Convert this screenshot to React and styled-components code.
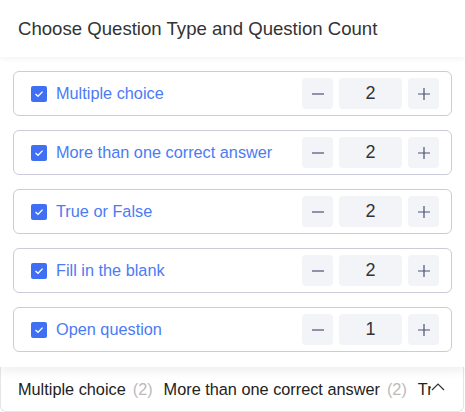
import React from "react"
import styled, { createGlobalStyle } from "styled-components"

const GlobalStyle = createGlobalStyle`
    body {
        margin: 0;
        background: #ffffff;
        font-family: "Liberation Sans", Arial, sans-serif;
    }
`

const Page = styled.div`
    width: 465px;
    height: 412px;
    overflow: hidden;
    position: relative;
    background: #ffffff;
`

const Popover = styled.div`
    position: relative;
    z-index: 2;
    background: #ffffff;
    box-shadow: 0 4px 10px rgba(0, 0, 0, 0.07);
`

const Header = styled.div`
    height: 57px;
    display: flex;
    align-items: center;
    padding-left: 18px;
    font-size: 18.6px;
    color: #333333;
    box-shadow: 0 2px 6px rgba(0, 0, 0, 0.05);
`

const List = styled.div`
    display: flex;
    flex-direction: column;
    gap: 14px;
    padding: 14px 13px 15px;
`

const Row = styled.div`
    height: 45px;
    box-sizing: border-box;
    display: flex;
    align-items: center;
    padding: 0 12px 0 17px;
    border: 1px solid #cbcbdc;
    border-radius: 6px;
`

const Check = styled.span`
    width: 16px;
    height: 16px;
    border-radius: 2px;
    background: #3f6ff4;
    display: flex;
    align-items: center;
    justify-content: center;
    flex-shrink: 0;
`

const Label = styled.span`
    margin-left: 9px;
    font-size: 16.3px;
    color: #4b7bf5;
    flex: 1;
`

const Stepper = styled.div`
    display: flex;
    gap: 6px;
`

const StepButton = styled.button`
    width: 31px;
    height: 31px;
    border: none;
    padding: 0;
    border-radius: 4px;
    background: #f2f4f8;
    display: flex;
    align-items: center;
    justify-content: center;
`

const Count = styled.div`
    width: 63px;
    height: 31px;
    border-radius: 4px;
    background: #f2f4f8;
    display: flex;
    align-items: center;
    justify-content: center;
    font-size: 18px;
    color: #333333;
`

const Summary = styled.div`
    height: 60px;
    box-sizing: border-box;
    margin-top: -15px;
    padding-top: 15px;
    border: 1px solid #e6e6ea;
    border-top: none;
    border-radius: 0 0 6px 6px;
    width: 464px;
    display: flex;
    align-items: center;
    position: relative;
`

const SummaryText = styled.div`
    width: 413px;
    margin-left: 17px;
    overflow: hidden;
    white-space: nowrap;
    font-size: 16.3px;
    color: #222222;
`

const Num = styled.span`
    color: #bbbbbb;
    margin: 0 11px 0 7px;
`

const Toggle = styled.span`
    display: flex;
    margin-top: -6px;
`

const types = [
    { name: "Multiple choice", count: 2 },
    { name: "More than one correct answer", count: 2 },
    { name: "True or False", count: 2 },
    { name: "Fill in the blank", count: 2 },
    { name: "Open question", count: 1 },
]

const Tick = () => (
    <svg width="10" height="8" viewBox="0 0 10 8">
        <path d="M1.5 4 L4 6.3 L8.6 1.6" fill="none" stroke="#fff" strokeWidth="1.3" />
    </svg>
)

const Minus = () => (
    <svg width="14" height="14" viewBox="0 0 14 14">
        <path d="M1 7 H13" stroke="#4a5274" strokeWidth="1.2" />
    </svg>
)

const Plus = () => (
    <svg width="14" height="14" viewBox="0 0 14 14">
        <path d="M1 7 H13 M7 1 V13" stroke="#4a5274" strokeWidth="1.2" />
    </svg>
)

const Chevron = () => (
    <svg width="14" height="9" viewBox="0 0 14 9">
        <path d="M1 8 L7 2 L13 8" fill="none" stroke="#333" strokeWidth="1.2" />
    </svg>
)

const App = () => (
    <Page>
        <GlobalStyle />
        <Popover>
            <Header>Choose Question Type and Question Count</Header>
            <List>
                {types.map((t) => (
                    <Row key={t.name}>
                        <Check><Tick /></Check>
                        <Label>{t.name}</Label>
                        <Stepper>
                            <StepButton><Minus /></StepButton>
                            <Count>{t.count}</Count>
                            <StepButton><Plus /></StepButton>
                        </Stepper>
                    </Row>
                ))}
            </List>
        </Popover>
        <Summary>
            <SummaryText>
                {types.map((t) => (
                    <React.Fragment key={t.name}>
                        {t.name}<Num>({t.count})</Num>
                    </React.Fragment>
                ))}
            </SummaryText>
            <Toggle><Chevron /></Toggle>
        </Summary>
    </Page>
)

export default App
